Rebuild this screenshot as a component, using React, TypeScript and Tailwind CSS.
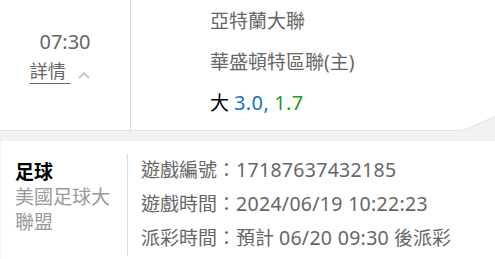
export default function App() {
  const font = { fontFamily: '"Noto Sans", "Noto Sans CJK TC", sans-serif' }

  return (
    <div className="relative w-[495px] h-[259px] overflow-hidden bg-[#f2f2f2]" style={font}>
      {/* top row */}
      <div className="flex h-[131px] bg-white border-b border-[#e3e3e3]">
        <div className="w-[131px] shrink-0 border-r border-[#dcdcdc] flex flex-col items-center pt-[27px]">
          <span className="text-[20px] leading-[30px] text-[#666]">07:30</span>
          <button className="mt-[2px] flex items-start gap-[8px] text-[18px] leading-[24px] text-[#666] -ml-[10px]">
            <span className="underline underline-offset-[5px] decoration-[#666]">詳情{'\u00a0'}</span>
            <svg width="12" height="8" viewBox="0 0 12 8" className="mt-[12px]">
              <path d="M1 7 L6 2 L11 7" fill="none" stroke="#c4c4c4" strokeWidth="1.8" />
            </svg>
          </button>
        </div>
        <div className="flex flex-col pl-[79px] pt-[8px] text-[19px] leading-[26px] text-[#666] gap-[15px]">
          <span>亞特蘭大聯</span>
          <span>華盛頓特區聯(主)</span>
          <span>
            <span className="text-black">大</span>{' '}
            <span className="text-[#1273c4] text-[20px] tracking-[0.4px]">3.0,</span>{' '}
            <span className="text-[#1f9a1f] text-[20px] tracking-[0.4px]">1.7</span>
          </span>
        </div>
      </div>

      {/* corner fold */}
      <svg className="absolute left-0 top-0" width="495" height="259">
        <polygon points="463,130 495,116 495,131 463,131" fill="#f2f2f2" />
        <line x1="463" y1="130.5" x2="495" y2="116.5" stroke="#e3e3e3" strokeWidth="1" />
      </svg>

      {/* bottom card */}
      <div className="mt-[10px] ml-[1px] h-[118px] bg-white flex pt-[13px]">
        <div className="w-[127px] shrink-0 border-r border-[#dcdcdc] pl-[14px] pr-[10px] pt-[6px] h-[102px]">
          <div className="text-[19px] leading-[25px] font-bold text-black">足球</div>
          <div className="text-[19px] leading-[25px] text-[#999]">美國足球大聯盟</div>
        </div>
        <div className="flex flex-col pl-[13px] -mt-[1px] text-[19px] leading-[33px] text-[#666]">
          <span>
            遊戲編號：<span className="text-[19.5px] tracking-[0.3px]">17187637432185</span>
          </span>
          <span>
            遊戲時間：<span className="text-[19.5px] tracking-[0.3px]">2024/06/19 10:22:23</span>
          </span>
          <span>
            派彩時間：預計 <span className="text-[19.5px] tracking-[0.3px]">06/20 09:30</span> 後派彩
          </span>
        </div>
      </div>
    </div>
  )
}
